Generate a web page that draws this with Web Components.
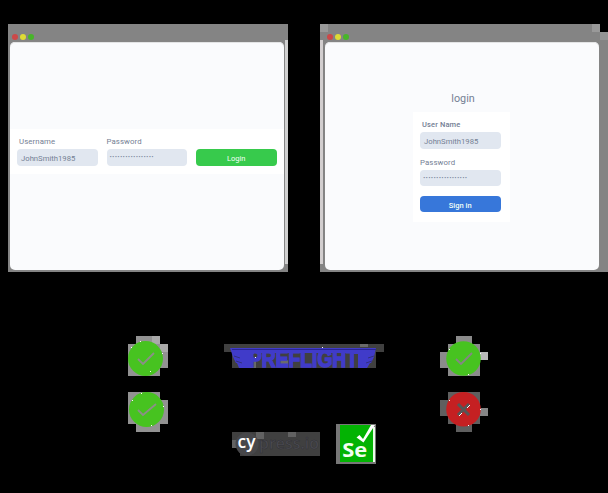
<!DOCTYPE html>
<html lang="en"><head><meta charset="utf-8"><title>Preflight</title>
<style>
*{box-sizing:border-box}
body{margin:0;background:#000;width:608px;height:493px;overflow:hidden;font-family:Roboto,"Liberation Sans",sans-serif;color:#748094}
</style></head><body>
<compare-page></compare-page>
<script>
const define=(name,html,init)=>customElements.define(name,class extends HTMLElement{
  constructor(){super();this.attachShadow({mode:'open'}).innerHTML='<style>*{box-sizing:border-box}</style>'+html;}
  connectedCallback(){if(init)init(this,this.shadowRoot);}
});
define('browser-window',`<style>
:host{display:grid;grid-template-rows:18px 228px;padding:0 4px 2px 2px;height:248px}
:host([side=left]){background:linear-gradient(to right,transparent 277px,#d0d0d0 277px) 0 16px/100% 224px no-repeat,#848484}
:host([side=right]){padding:0 9px 2px 5px;background:linear-gradient(to right,#d2cecf 3px,transparent 3px) 0 16px/100% 224px no-repeat,linear-gradient(#999,#999) 0 0/8px 8px no-repeat,linear-gradient(#999,#999) 272px 0/8px 8px no-repeat,linear-gradient(#949494,#949494) 280px 8px/8px 8px no-repeat,#848484;clip-path:polygon(0 0,280px 0,280px 8px,288px 8px,288px 100%,0 100%)}
.bar{display:flex;gap:2px;padding:10px 0 0 2px}
i{width:6px;height:6px;border-radius:50%}
.body{background:#fafbfd;border-radius:5px;overflow:hidden;box-shadow:0 0 0 1px #858585,inset 0 1px #e3e4e5}
</style><div class="bar"><i style="background:#cc4848"></i><i style="background:#dedb35"></i><i style="background:#47b529"></i></div><div class="body"><slot></slot></div>`);
define('text-field',`<style>
:host{display:block;width:80.5px;font-size:7.8px}
.l{height:12px;line-height:12px;padding-left:var(--lp,0);margin-bottom:1px;white-space:nowrap;letter-spacing:.1px}
.l.b{font-weight:500;font-size:7.5px;letter-spacing:.13px}
.i{height:16.5px;border-radius:4px;background:#e1e7f0;padding:2px 0 0 4px;line-height:16px;font-size:7.7px;white-space:nowrap;overflow:hidden}
.i.d{font-size:8px;font-weight:700;letter-spacing:.2px;padding-top:0;padding-left:3px;line-height:15px}
</style><div class="l"></div><div class="i"></div>`,(h,r)=>{
 const l=r.querySelector('.l'),i=r.querySelector('.i');l.textContent=h.getAttribute('label');i.textContent=h.getAttribute('value');
 if(h.hasAttribute('strong'))l.classList.add('b');if(h.hasAttribute('secret'))i.classList.add('d');});
define('action-button',`<style>:host{display:block;width:80.5px;height:17px;border-radius:4px;background:var(--bg);color:#f4fff6;font-size:7.5px;line-height:19px;text-align:center;overflow:hidden}</style><slot></slot>`);
define('inline-login',`<style>:host{display:block;padding-top:87px}
.row{height:45px;background:#fff;display:flex;gap:9px;padding:7px 7px 0}
action-button{--bg:#37ca4c;margin-top:13px;height:16.5px}text-field{--lp:2px}text-field+text-field{--lp:0px}
</style><div class="row"><text-field label="Username" value="JohnSmith1985"></text-field><text-field label="Password" value="·················" secret></text-field><action-button>Login</action-button></div>`);
define('stacked-login',`<style>:host{display:flex;flex-direction:column;align-items:center;padding:50px 1px 0 0}
h1{margin:0 0 6px 3px;font-size:10.8px;font-weight:400;line-height:14px}
.card{width:97px;height:110px;background:#fff;padding:7px 8px 0 7px;display:flex;flex-direction:column;gap:8px}
action-button{--bg:#3777da;font-weight:500;margin-top:1.5px;height:16.5px}
text-field:first-child{--lp:2px}
</style><h1>login</h1><div class="card"><text-field label="User Name" value="JohnSmith1985" strong></text-field><text-field label="Password" value="·················" secret></text-field><action-button>Sign in</action-button></div>`);
const art={
 pa:'<path fill="#929292" d="M8 0H32V8H40V32H32V40H0V8H8z"/><path fill="#a9a9a9" d="M24 0h8v8h-8zM32 8h8v8h-8z"/><circle cx="17.5" cy="22.5" r="17.5" fill="#47c320"/><path d="m10 23 5 5 11-11" fill="none" stroke="#8b8f87" stroke-width="1.8"/><path fill="#fff" d="M3 11h1v1H3zM22 35h1v1h-1zM34 17h1v1h-1zM12 5h1v1h-1z"/>',
 pb:'<path fill="#929292" d="M0 0H32V8H40V32H32V40H8V32H0z"/><circle cx="18.5" cy="17.5" r="17.5" fill="#47c320"/><path d="m10 18 5 5 13-11" fill="none" stroke="#8b8f87" stroke-width="1.8"/><path fill="#fff" d="M4 8h1v1H4zM23 33h1v1h-1zM35 14h1v1h-1zM13 1h1v1h-1z"/>',
 pc:'<path fill="#8b8b8b" d="M16 0H32V8H40V16H48V24H40V40H8V32H0V16H8V8H16z"/><path fill="#b9b9b9" d="M40 16h8v8h-8z"/><circle cx="23.5" cy="22.5" r="17.3" fill="#47c320"/><path d="m16 23 5 5 11-11" fill="none" stroke="#858585" stroke-width="1.8"/><path fill="#fff" d="M9 13h1v1H9zM28 38h1v1h-1zM40 17h1v1h-1z"/>',
 no:'<path fill="#5f5f5f" d="M8 0H40V16H48V24H40V32H32V40H16V32H8V24H0V8H8z"/><path fill="#858585" d="M40 16h8v8h-8z"/><circle cx="23.5" cy="17.3" r="17.3" fill="#c52022"/><path d="m18 12 11 11M29 12 18 23" stroke="#565656" stroke-width="3"/><path fill="none" stroke="#fff" d="m19 24 3-3M27 16l3-3"/><path fill="#fff" d="M9 8h1v1H9zM28 33h1v1h-1zM40 17h1v1h-1z"/>',
 flight:'<path fill="#404040" d="M0 0H160V8H152V24H8V8H0z"/><path fill="#6a6a6a" d="M24 16h8v8h-8zM136 0h8v3h-8zM56 16h8v5h-8z"/><g fill="#403bc9"><path d="M6 4H30V10H26V24H15L13 19H12L9 13z"/><path d="M152 4H130V10H134V24H143L146 19H147L150 13z"/><path d="M24 4H136V9H24z"/><text x="25" y="23.2" font-family="Liberation Sans,sans-serif" font-weight="700" font-size="23" textLength="109" lengthAdjust="spacingAndGlyphs" stroke="#403bc9" stroke-width="1.5">PREFLIGHT</text></g><path d="M8 5.5H152" stroke="#292493"/><path d="m10 12 6 2M12 17l6 2M150 12l-6 2M148 17l-6 2" stroke="#32307e"/><path fill="#fff" d="M98 3h1v1h-1zM31 13h1v1h-1z"/>',
 cy:'<path fill="#404040" d="M0 0H88V24H8V16H0z"/><path fill="#626262" d="M0 8h5v8H0zM24 0h8v7h-8zM56 0h8v5h-8z"/><circle cx="15" cy="12" r="11.5" fill="#47474a"/><g font-family="Open Sans,sans-serif"><text x="5.5" y="15.5" font-size="18" font-weight="600" fill="#fff" textLength="18" lengthAdjust="spacingAndGlyphs">cy</text><text x="27" y="16.5" font-size="17" font-weight="600" fill="#4b4b51" stroke="#303036" stroke-width=".5" textLength="60" lengthAdjust="spacingAndGlyphs">press.io</text></g>',
 se:'<path fill="#777" d="M0 0H40V40H0z"/><path fill="#03b303" d="M4 1H37V38H4z"/><path fill="#eafbe9" d="M37 3h2v35h-2z"/><text x="6.3" y="33" font-family="Open Sans,sans-serif" font-size="20" font-weight="700" fill="#f3fff1" textLength="25" lengthAdjust="spacingAndGlyphs">Se</text><path d="m20.500 13.500 3-2.500 3.500 4L35 1h4L27.500 18.500z" fill="#fff"/>'
};
define('line-art','<style>:host{display:block;flex:none;line-height:0}svg{display:block}</style><div></div>',(h,r)=>{
 const w=h.getAttribute('w'),t=h.getAttribute('t');
 r.querySelector('div').innerHTML=`<svg width="${w}" height="${t}" viewBox="0 0 ${w} ${t}">${art[h.getAttribute('art')]}</svg>`;});
define('compare-page',`<style>
:host{display:grid;grid-template-rows:248px auto;row-gap:64px;padding-top:24px}
.windows{display:grid;grid-template-columns:280px 288px;gap:32px;padding-left:8px}
.results{display:grid;grid-template-columns:96px 216px 48px;padding-left:128px}
.col{display:flex;flex-direction:column;gap:16px}
.logos{padding:8px 0 0 0;gap:56px}
.brands{display:flex;gap:16px;padding-left:8px;align-items:center}
</style><div class="windows"><browser-window side="left"><inline-login></inline-login></browser-window><browser-window side="right"><stacked-login></stacked-login></browser-window></div>
<div class="results"><div class="col"><line-art art="pa" w="40" t="40"></line-art><line-art art="pb" w="40" t="40"></line-art></div>
<div class="col logos"><line-art art="flight" w="160" t="24"></line-art><div class="brands"><line-art art="cy" w="88" t="24"></line-art><line-art art="se" w="40" t="40"></line-art></div></div>
<div class="col"><line-art art="pc" w="48" t="40"></line-art><line-art art="no" w="48" t="40"></line-art></div></div>`);
</script></body></html>
